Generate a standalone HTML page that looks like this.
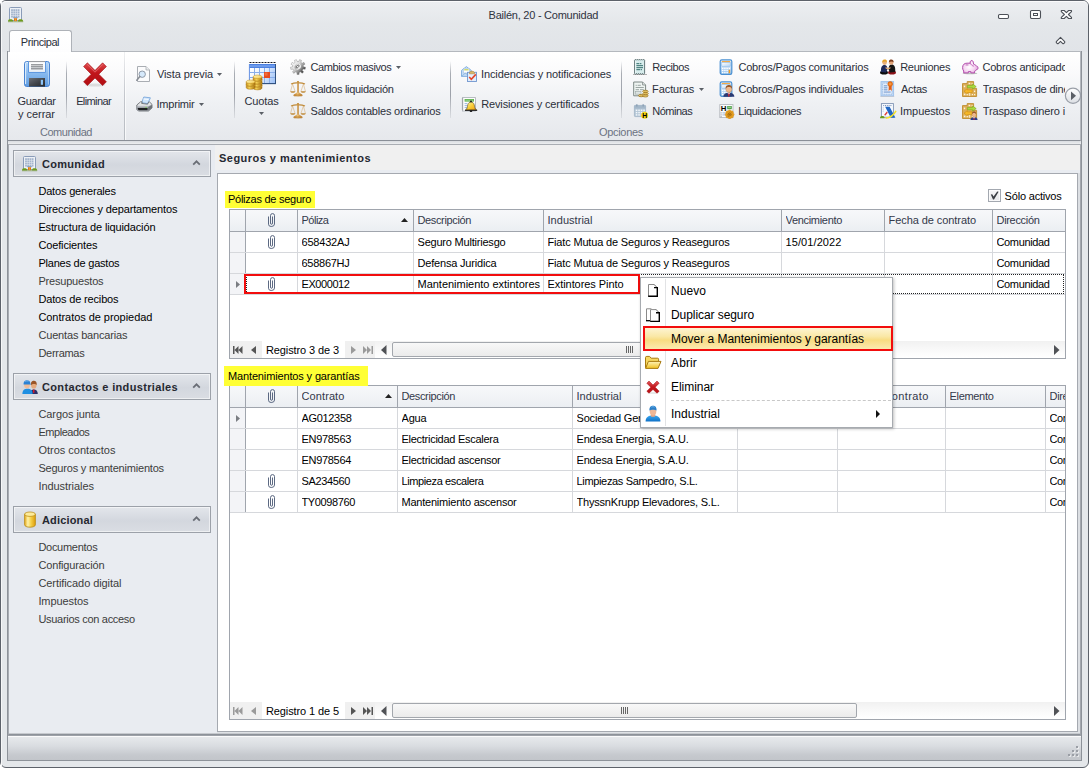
<!DOCTYPE html>
<html lang="es">
<head>
<meta charset="utf-8">
<title>Bailén, 20 - Comunidad</title>
<style>
html,body{margin:0;padding:0;}
body{width:1089px;height:768px;overflow:hidden;background:#fff;font:11px/13px "Liberation Sans", sans-serif;color:#000;}
#win{position:absolute;left:0;top:0;width:1089px;height:768px;overflow:hidden;}
#win div,#win span,#win svg{position:absolute;box-sizing:border-box;}
.t{white-space:nowrap;font:11px/13px "Liberation Sans", sans-serif;}
#win .g{left:0;top:0;width:0;height:0;}

</style>
</head>
<body>
<div id="win">
<div class="g" id="window-frame">
<div style="left:0px;top:0px;width:1089px;height:768px;background:#e4e7ea;border:1px solid #5d626a;border-radius:6px;"></div>
<div style="left:1px;top:1px;width:1087px;height:51px;background:linear-gradient(#eceef1 0,#e4e7ea 45%,#e1e4e8 100%);border-top:1px solid #fbfbfc;border-radius:5px 5px 0 0;"></div>
<div style="left:1px;top:1px;width:1px;height:766px;background:#f6f7f8;"></div>
<div style="left:7px;top:51px;width:1075px;height:710px;border:1px solid #8d9299;border-top:0;background:#e9ecf0;"></div>
</div>
<div class="g" id="titlebar">
<span class="t" style="left:488.6px;top:9px;color:#2f3340;letter-spacing:-0.244px;">Bailén, 20 - Comunidad</span>
<svg style="left:997px;top:13px;" width="13" height="7" viewBox="0 0 13 7"><rect x="1.5" y="1.5" width="10" height="4" rx="1.2" fill="#fff" stroke="#4d5158" stroke-width="1.1"/></svg>
<svg style="left:1029px;top:9px;" width="13" height="11" viewBox="0 0 13 11"><rect x="1.5" y="1.5" width="10" height="8" rx="1.2" fill="#fdfdfd" stroke="#4d5158" stroke-width="1.1"/><rect x="4.5" y="4.5" width="4" height="2" fill="#fff" stroke="#4d5158" stroke-width="1"/></svg>
<svg style="left:1060px;top:9px;" width="13" height="11" viewBox="0 0 13 11"><path d="M1.3 1.5 H4.2 L6.4 3.6 L8.6 1.5 H11.5 V2.6 L8.4 5.5 L11.5 8.4 V9.5 H8.6 L6.4 7.4 L4.2 9.5 H1.3 V8.4 L4.4 5.5 L1.3 2.6 Z" fill="#fff" stroke="#4d5158" stroke-width="1.1" stroke-linejoin="round"/></svg>
<svg style="left:1055px;top:36px;" width="11" height="9" viewBox="0 0 11 9"><path d="M1.3 5.6 L5.5 1.4 L9.7 5.6 V6.6 L8.6 7.6 H7.8 L5.5 5.3 L3.2 7.6 H2.4 L1.3 6.6 Z" fill="#fff" stroke="#4d5158" stroke-width="1.1" stroke-linejoin="round"/></svg>
</div>
<div class="g" id="ribbon">
<div style="left:8px;top:51px;width:1073px;height:90px;background:linear-gradient(#ffffff 0,#fbfbfc 20%,#eef0f3 60%,#e6e8ec 100%);border:1px solid #b4b8be;border-bottom:1px solid #8a8f97;border-left:0;"></div>
<div style="left:9px;top:30px;width:63px;height:22px;background:linear-gradient(#ffffff,#fdfdfe);border:1px solid #aeb2b8;border-bottom:0;border-radius:3px 3px 0 0;"></div>
<span class="t" style="left:20.8px;top:36px;color:#2b2f3a;letter-spacing:-0.432px;">Principal</span>
<div style="left:8px;top:141px;width:1073px;height:3px;background:linear-gradient(#d9dce0,#eceef0);"></div>
<div style="left:124px;top:52px;width:1px;height:88px;background:linear-gradient(rgba(180,184,190,0.2),#c3c6cc 50%,#b8bcc2);"></div>
<div style="left:125px;top:52px;width:1px;height:88px;background:rgba(255,255,255,0.7);"></div>
<div style="left:66px;top:61px;width:1px;height:57px;background:linear-gradient(rgba(160,164,170,0),#a9adb4 22%,#9da1a9 60%,rgba(160,164,170,.2));"></div>
<div style="left:234px;top:61px;width:1px;height:57px;background:linear-gradient(rgba(160,164,170,0),#a9adb4 22%,#9da1a9 60%,rgba(160,164,170,.2));"></div>
<div style="left:450px;top:61px;width:1px;height:57px;background:linear-gradient(rgba(160,164,170,0),#a9adb4 22%,#9da1a9 60%,rgba(160,164,170,.2));"></div>
<div style="left:621px;top:61px;width:1px;height:57px;background:linear-gradient(rgba(160,164,170,0),#a9adb4 22%,#9da1a9 60%,rgba(160,164,170,.2));"></div>
<span class="t" style="left:17.45px;top:95px;color:#2b2f3a;letter-spacing:-0.294px;">Guardar</span>
<span class="t" style="left:18.1px;top:108px;color:#2b2f3a;letter-spacing:-0.060px;">y cerrar</span>
<span class="t" style="left:76.15px;top:95px;color:#2b2f3a;letter-spacing:-0.617px;">Eliminar</span>
<span class="t" style="left:40px;top:126px;color:#6c7382;letter-spacing:-0.474px;">Comunidad</span>
<span class="t" style="left:157px;top:68px;color:#2b2f3a;letter-spacing:-0.107px;">Vista previa</span>
<span class="t" style="left:156.5px;top:98px;color:#2b2f3a;letter-spacing:-0.215px;">Imprimir</span>
<span class="t" style="left:244.45px;top:95px;color:#2b2f3a;letter-spacing:-0.093px;">Cuotas</span>
<span class="t" style="left:310.45px;top:61px;color:#2b2f3a;letter-spacing:-0.388px;">Cambios masivos</span>
<span class="t" style="left:310.5px;top:83px;color:#2b2f3a;letter-spacing:-0.315px;">Saldos liquidación</span>
<span class="t" style="left:310.5px;top:105px;color:#2b2f3a;letter-spacing:-0.190px;">Saldos contables ordinarios</span>
<span class="t" style="left:481.05px;top:68px;color:#2b2f3a;letter-spacing:-0.118px;">Incidencias y notificaciones</span>
<span class="t" style="left:481.15px;top:98px;color:#2b2f3a;letter-spacing:-0.122px;">Revisiones y certificados</span>
<span class="t" style="left:652.15px;top:61px;color:#2b2f3a;letter-spacing:-0.393px;">Recibos</span>
<span class="t" style="left:652.1px;top:83px;color:#2b2f3a;letter-spacing:-0.100px;">Facturas</span>
<span class="t" style="left:652.2px;top:105px;color:#2b2f3a;letter-spacing:-0.487px;">Nóminas</span>
<span class="t" style="left:738.45px;top:61px;color:#2b2f3a;letter-spacing:-0.205px;">Cobros/Pagos comunitarios</span>
<span class="t" style="left:738.45px;top:83px;color:#2b2f3a;letter-spacing:-0.210px;">Cobros/Pagos individuales</span>
<span class="t" style="left:738.15px;top:105px;color:#2b2f3a;letter-spacing:-0.329px;">Liquidaciones</span>
<span class="t" style="left:900.15px;top:61px;color:#2b2f3a;letter-spacing:-0.288px;">Reuniones</span>
<span class="t" style="left:901px;top:83px;color:#2b2f3a;letter-spacing:-0.303px;">Actas</span>
<span class="t" style="left:900.05px;top:105px;color:#2b2f3a;letter-spacing:-0.083px;">Impuestos</span>
<span class="t" style="left:982.45px;top:61px;color:#2b2f3a;letter-spacing:-0.221px;width:82.6px;overflow:hidden;">Cobros anticipados</span>
<span class="t" style="left:982.75px;top:83px;color:#2b2f3a;letter-spacing:-0.204px;width:82.3px;overflow:hidden;">Traspasos de dinero</span>
<span class="t" style="left:982.75px;top:105px;color:#2b2f3a;letter-spacing:-0.138px;width:82.3px;overflow:hidden;">Traspaso dinero individual</span>
<span class="t" style="left:599px;top:126px;color:#6c7382;letter-spacing:-0.311px;">Opciones</span>
<svg style="left:217px;top:73px;" width="5" height="3" viewBox="0 0 5 3"><path d="M0 0 H5 L2.5 3 Z" fill="#5a5f66"/></svg>
<svg style="left:199px;top:103px;" width="5" height="3" viewBox="0 0 5 3"><path d="M0 0 H5 L2.5 3 Z" fill="#5a5f66"/></svg>
<svg style="left:259px;top:112px;" width="5" height="3" viewBox="0 0 5 3"><path d="M0 0 H5 L2.5 3 Z" fill="#5a5f66"/></svg>
<svg style="left:396px;top:66px;" width="5" height="3" viewBox="0 0 5 3"><path d="M0 0 H5 L2.5 3 Z" fill="#5a5f66"/></svg>
<svg style="left:699px;top:88px;" width="5" height="3" viewBox="0 0 5 3"><path d="M0 0 H5 L2.5 3 Z" fill="#5a5f66"/></svg>
<svg style="left:1064px;top:87px;" width="18" height="18" viewBox="0 0 18 18"><defs><linearGradient id="sb" x1="0" y1="0" x2="0" y2="1"><stop offset="0" stop-color="#ffffff"/><stop offset="1" stop-color="#dcdfe4"/></linearGradient></defs><circle cx="9" cy="8.8" r="7.6" fill="url(#sb)" stroke="#9a9fa8" stroke-width="1.2"/><path d="M7 4.4 L12 8.8 L7 13.2 Z" fill="#5b5f66"/></svg>
<svg style="left:8px;top:7px;" width="16" height="16" viewBox="0 0 16 16"><rect x="1.5" y="0.5" width="12" height="13" rx="1" fill="#edf1f6" stroke="#8a9cb8"/><g fill="#a5b5cc"><rect x="3.1" y="2.2" width="1.8" height="1.8"/><rect x="3.1" y="4.4" width="1.8" height="1.8"/><rect x="3.1" y="6.6000000000000005" width="1.8" height="1.8"/><rect x="3.1" y="8.8" width="1.8" height="1.8"/><rect x="5.300000000000001" y="2.2" width="1.8" height="1.8"/><rect x="5.300000000000001" y="4.4" width="1.8" height="1.8"/><rect x="5.300000000000001" y="6.6000000000000005" width="1.8" height="1.8"/><rect x="5.300000000000001" y="8.8" width="1.8" height="1.8"/><rect x="7.5" y="2.2" width="1.8" height="1.8"/><rect x="7.5" y="4.4" width="1.8" height="1.8"/><rect x="7.5" y="6.6000000000000005" width="1.8" height="1.8"/><rect x="7.5" y="8.8" width="1.8" height="1.8"/><rect x="9.700000000000001" y="2.2" width="1.8" height="1.8"/><rect x="9.700000000000001" y="4.4" width="1.8" height="1.8"/><rect x="9.700000000000001" y="6.6000000000000005" width="1.8" height="1.8"/><rect x="9.700000000000001" y="8.8" width="1.8" height="1.8"/></g><rect x="5.2" y="10.3" width="4.6" height="0.9" fill="#6f8fb8"/><rect x="6" y="11.2" width="3" height="3" fill="#e07c12"/><rect x="7.3" y="11.2" width="0.5" height="3" fill="#f7b25a"/><path d="M0 14.6 C0 12.4 1.4 12.2 2.6 12.2 C4 12.2 5.2 12.6 5.2 14.6 Z" fill="#6d9b1d"/><path d="M10 14.6 C10 12.4 11.4 12.2 12.6 12.2 C14 12.2 15.2 12.6 15.2 14.6 Z" fill="#6d9b1d"/><rect x="0" y="14.4" width="15.2" height="0.8" fill="#7a9a4a" opacity=".8"/></svg>
<svg style="left:23px;top:60px;" width="28" height="28" viewBox="0 0 28 28"><defs><linearGradient id="g1" x1="0" y1="0" x2="0" y2="1"><stop offset="0" stop-color="#b4d6f8"/><stop offset=".5" stop-color="#86b8ee"/><stop offset="1" stop-color="#5e9be0"/></linearGradient><linearGradient id="g3" x1="0" y1="0" x2="0" y2="1"><stop offset="0" stop-color="#ffffff"/><stop offset=".7" stop-color="#f4f7fb"/><stop offset="1" stop-color="#dbe5f2"/></linearGradient><linearGradient id="g2" x1="0" y1="0" x2="1" y2="1"><stop offset="0" stop-color="#6a6e76"/><stop offset=".5" stop-color="#43464b"/><stop offset="1" stop-color="#26282b"/></linearGradient></defs><rect x="1.5" y="1.5" width="25" height="25" rx="2.2" fill="url(#g1)" stroke="#4a84d2"/><path d="M2.6 24 V3.4 Q2.6 2.6 3.6 2.6 H5" fill="none" stroke="#e6f2fd" stroke-width="1" opacity=".95"/><path d="M25.5 4 V24.5" fill="none" stroke="#cfe4fa" stroke-width=".8" opacity=".7"/><path d="M5.5 1.5 V12.5 H22.5 V1.5" fill="url(#g3)" stroke="#5f98e0" stroke-width="1"/><path d="M6 1.6 H22" stroke="#9a9a9a" stroke-width="1"/><g fill="#5a5d62"><rect x="8" y="4.4" width="12" height=".9"/><rect x="8" y="6.4" width="12" height=".9"/><rect x="8" y="8.4" width="12" height=".9"/></g><rect x="6" y="18" width="16" height="8.6" fill="url(#g2)"/><rect x="17.8" y="19.8" width="2.2" height="5" fill="#8cc4f8"/></svg>
<svg style="left:82px;top:61px;" width="26" height="26" viewBox="0 0 26 26"><defs><linearGradient id="g4" x1="0" y1="0" x2="0" y2="1"><stop offset="0" stop-color="#e04a4d"/><stop offset=".45" stop-color="#c0151a"/><stop offset="1" stop-color="#b20e13"/></linearGradient></defs><ellipse cx="13" cy="24" rx="10" ry="1.6" fill="#000" opacity=".10"/><path d="M5.4 1.8 L13 9.4 L20.6 1.8 L24.4 5.6 L16.8 13.2 L24.4 20.8 L20.6 24.6 L13 17 L5.4 24.6 L1.6 20.8 L9.2 13.2 L1.6 5.6 Z" fill="url(#g4)" stroke="#a00c11" stroke-width=".6" stroke-linejoin="round"/><path d="M5 3.2 L13 11.2 L21 3.2" fill="none" stroke="#f08a8c" stroke-width="1" opacity=".6"/></svg>
<svg style="left:136px;top:66px;" width="16" height="16" viewBox="0 0 16 16"><path d="M1.5 0.5 H10 L13.5 4 V15.5 H1.5 Z" fill="#fbfbfc" stroke="#a9adb3"/><path d="M10 0.5 V4 H13.5" fill="#eceef0" stroke="#a9adb3" stroke-width=".8"/><circle cx="6.2" cy="8.2" r="3.2" fill="#d6e9fb" stroke="#8f9aa8" stroke-width="1"/><path d="M3.8 10.6 L0.8 14.2" stroke="#8a8f97" stroke-width="1.6" stroke-linecap="round"/></svg>
<svg style="left:136px;top:96px;" width="17" height="16" viewBox="0 0 17 16"><defs><linearGradient id="g5" x1="0" y1="0" x2="0" y2="1"><stop offset="0" stop-color="#f4f5f6"/><stop offset="1" stop-color="#b4b8be"/></linearGradient></defs><path d="M5.6 6.6 L7.8 1 L14.4 1.8 L11.8 7.6 Z" fill="#cfe4fb" stroke="#6f9fd8" stroke-width=".8"/><path d="M7.4 3 L12.6 3.6" stroke="#ffffff" stroke-width=".8"/><path d="M0.8 9 L4.6 5.8 H6.2 L5.6 7.4 L11.6 8.2 L12.6 6 H13.6 L16 8.4 V12 L12.4 15 H2.4 L0.8 13.4 Z" fill="url(#g5)" stroke="#5c6066" stroke-width=".8" stroke-linejoin="round"/><path d="M0.8 10.6 H12 L16 8.4 V12 L12.4 15 H2.4 L0.8 13.4 Z" fill="#9ea2a9"/><path d="M1.8 12 H11.6 V14.2 H2.8 L1.8 13.2 Z" fill="#1e2023"/><path d="M12.2 14.8 L16 11.8 V9 L12.2 11 Z" fill="#6e7278"/><rect x="9.4" y="10.9" width="1.3" height=".9" fill="#78d840"/></svg>
<svg style="left:245px;top:60px;" width="34" height="32" viewBox="0 0 34 32"><defs><linearGradient id="g6" gradientUnits="userSpaceOnUse" x1="5" y1="8" x2="30" y2="23"><stop offset="0" stop-color="#ffffff"/><stop offset=".45" stop-color="#eaf2fe"/><stop offset="1" stop-color="#9cc0f6"/></linearGradient><linearGradient id="g7" x1="0" y1="0" x2="0" y2="1"><stop offset="0" stop-color="#3a72dc"/><stop offset=".5" stop-color="#7ea8f0"/><stop offset="1" stop-color="#3a72dc"/></linearGradient><linearGradient id="g8" x1="0" y1="0" x2="1" y2="0"><stop offset="0" stop-color="#c48c18"/><stop offset=".35" stop-color="#f6d458"/><stop offset="1" stop-color="#a8720e"/></linearGradient><linearGradient id="g9" x1="0" y1="0" x2="1" y2="1"><stop offset="0" stop-color="#fff6bc"/><stop offset="1" stop-color="#f2c84a"/></linearGradient></defs><rect x="4" y="3" width="27" height="21" fill="#8aaeea"/><rect x="4" y="3" width="27" height="1.2" fill="#ffffff"/><path d="M4.5 2.5 H31" stroke="#16161e" stroke-width="1" stroke-dasharray="2 1"/><rect x="4" y="4" width="27" height="4" fill="url(#g7)"/><g fill="url(#g6)"><rect x="5" y="8" width="4" height="4"/><rect x="10" y="8" width="4" height="4"/><rect x="15" y="8" width="4" height="4"/><rect x="20" y="8" width="4" height="4"/><rect x="25" y="8" width="5" height="4"/><rect x="5" y="13" width="4" height="4"/><rect x="10" y="13" width="4" height="4"/><rect x="15" y="13" width="4" height="4"/><rect x="20" y="13" width="4" height="4"/><rect x="25" y="13" width="5" height="4"/><rect x="5" y="18" width="4" height="5"/><rect x="10" y="18" width="4" height="5"/><rect x="15" y="18" width="4" height="5"/><rect x="20" y="18" width="4" height="5"/><rect x="25" y="18" width="5" height="5"/></g><rect x="19" y="12" width="6" height="6" fill="#e84a1e"/><rect x="19.6" y="12.6" width="3" height="3" fill="#f47a48" opacity=".7"/><path d="M30.5 4 V24" stroke="#2f507e" stroke-width="1"/><path d="M4 23.6 H31" stroke="#2f507e" stroke-width="1.1"/><path d="M4.4 4 V23" stroke="#6a94e2" stroke-width=".8"/><path d="M8.2 25.5 V28.099999999999998 A4.4 1.8 0 0 0 17.0 28.099999999999998 V25.5 Z" fill="url(#g8)" stroke="#a87412" stroke-width=".5"/><ellipse cx="12.6" cy="25.5" rx="4.4" ry="1.8" fill="url(#g9)" stroke="#c08c1c" stroke-width=".5"/><path d="M8.2 22.6 V25.2 A4.4 1.8 0 0 0 17.0 25.2 V22.6 Z" fill="url(#g8)" stroke="#a87412" stroke-width=".5"/><ellipse cx="12.6" cy="22.6" rx="4.4" ry="1.8" fill="url(#g9)" stroke="#c08c1c" stroke-width=".5"/><path d="M8.2 19.7 V22.299999999999997 A4.4 1.8 0 0 0 17.0 22.299999999999997 V19.7 Z" fill="url(#g8)" stroke="#a87412" stroke-width=".5"/><ellipse cx="12.6" cy="19.7" rx="4.4" ry="1.8" fill="url(#g9)" stroke="#c08c1c" stroke-width=".5"/><path d="M8.2 16.8 V19.4 A4.4 1.8 0 0 0 17.0 19.4 V16.8 Z" fill="url(#g8)" stroke="#a87412" stroke-width=".5"/><ellipse cx="12.6" cy="16.8" rx="4.4" ry="1.8" fill="url(#g9)" stroke="#c08c1c" stroke-width=".5"/><path d="M1.1999999999999993 24.8 V27.5 A4.4 1.8 0 0 0 10.0 27.5 V24.8 Z" fill="url(#g8)" stroke="#a87412" stroke-width=".5"/><ellipse cx="5.6" cy="24.8" rx="4.4" ry="1.8" fill="url(#g9)" stroke="#c08c1c" stroke-width=".5"/><path d="M1.1999999999999993 21.8 V24.5 A4.4 1.8 0 0 0 10.0 24.5 V21.8 Z" fill="url(#g8)" stroke="#a87412" stroke-width=".5"/><ellipse cx="5.6" cy="21.8" rx="4.4" ry="1.8" fill="url(#g9)" stroke="#c08c1c" stroke-width=".5"/></svg>
<svg style="left:290px;top:59px;" width="16" height="16" viewBox="0 0 16 16"><defs><linearGradient id="g10" gradientUnits="userSpaceOnUse" x1="2" y1="3" x2="14" y2="13"><stop offset="0" stop-color="#ffffff"/><stop offset=".4" stop-color="#dcdcdc"/><stop offset=".72" stop-color="#8a8a8a"/><stop offset="1" stop-color="#262626"/></linearGradient><linearGradient id="g11" gradientUnits="userSpaceOnUse" x1="4" y1="4" x2="12" y2="12"><stop offset="0" stop-color="#6e6e6e"/><stop offset=".5" stop-color="#e8e8e8"/><stop offset="1" stop-color="#ffffff"/></linearGradient></defs><path d="M13.50 7.84 L15.50 8.22 L15.14 10.29 L13.13 9.99 L12.32 11.41 L13.60 12.99 L12.00 14.34 L10.65 12.82 L9.12 13.39 L9.08 15.42 L6.99 15.43 L6.93 13.40 L5.39 12.84 L4.06 14.38 L2.45 13.04 L3.71 11.45 L2.89 10.04 L0.88 10.35 L0.51 8.29 L2.50 7.88 L2.78 6.27 L1.03 5.22 L2.07 3.41 L3.86 4.38 L5.11 3.32 L4.45 1.40 L6.41 0.67 L7.16 2.56 L8.79 2.56 L9.52 0.66 L11.49 1.36 L10.85 3.30 L12.11 4.34 L13.89 3.35 L14.94 5.16 L13.21 6.23 Z" fill="url(#g10)" stroke="#7a7a7a" stroke-width=".4" stroke-linejoin="round"/><ellipse cx="7.8" cy="7.8" rx="3.3" ry="2.7" fill="url(#g11)" transform="rotate(-40 7.8 7.8)"/><ellipse cx="7.7" cy="7.5" rx="1.8" ry=".9" fill="#ffffff" stroke="#4a4a4a" stroke-width=".7" transform="rotate(-42 7.7 7.5)"/></svg>
<svg style="left:290px;top:81px;" width="16" height="16" viewBox="0 0 16 16"><defs><linearGradient id="g12" x1="0" y1="0" x2="1" y2="0"><stop offset="0" stop-color="#b87a28"/><stop offset=".45" stop-color="#ecc27a"/><stop offset="1" stop-color="#b47424"/></linearGradient></defs><g fill="none" stroke="#d9b078" stroke-width=".6"><path d="M2.6 3 L0.6 10.2 M2.6 3 L5 10.2"/><path d="M13.4 3 L11 10.2 M13.4 3 L15.4 10.2"/></g><path d="M1 3.1 Q4.5 1.6 8 2 Q11.5 1.6 15 3.1" fill="none" stroke="#c08a38" stroke-width="1.1"/><rect x="7.2" y="0.8" width="1.6" height="12.6" fill="url(#g12)"/><circle cx="8" cy="1" r="1.1" fill="#c89444"/><path d="M0.2 10.2 H5.4 C5.2 11.5 4 11.8 2.8 11.8 C1.6 11.8 0.4 11.5 0.2 10.2 Z" fill="#c08a38"/><path d="M10.6 10.2 H15.8 C15.6 11.5 14.4 11.8 13.2 11.8 C12 11.8 10.8 11.5 10.6 10.2 Z" fill="#c08a38"/><path d="M6.8 11.4 L3.4 14 C3.4 15.6 12.6 15.6 12.6 14 L9.2 11.4 Z" fill="url(#g12)"/><ellipse cx="8" cy="14.4" rx="4.7" ry="1.2" fill="#b87a28" opacity=".55"/></svg>
<svg style="left:290px;top:103px;" width="16" height="16" viewBox="0 0 16 16"><defs><linearGradient id="g13" x1="0" y1="0" x2="1" y2="0"><stop offset="0" stop-color="#b87a28"/><stop offset=".45" stop-color="#ecc27a"/><stop offset="1" stop-color="#b47424"/></linearGradient></defs><g fill="none" stroke="#d9b078" stroke-width=".6"><path d="M2.6 3 L0.6 10.2 M2.6 3 L5 10.2"/><path d="M13.4 3 L11 10.2 M13.4 3 L15.4 10.2"/></g><path d="M1 3.1 Q4.5 1.6 8 2 Q11.5 1.6 15 3.1" fill="none" stroke="#c08a38" stroke-width="1.1"/><rect x="7.2" y="0.8" width="1.6" height="12.6" fill="url(#g13)"/><circle cx="8" cy="1" r="1.1" fill="#c89444"/><path d="M0.2 10.2 H5.4 C5.2 11.5 4 11.8 2.8 11.8 C1.6 11.8 0.4 11.5 0.2 10.2 Z" fill="#c08a38"/><path d="M10.6 10.2 H15.8 C15.6 11.5 14.4 11.8 13.2 11.8 C12 11.8 10.8 11.5 10.6 10.2 Z" fill="#c08a38"/><path d="M6.8 11.4 L3.4 14 C3.4 15.6 12.6 15.6 12.6 14 L9.2 11.4 Z" fill="url(#g13)"/><ellipse cx="8" cy="14.4" rx="4.7" ry="1.2" fill="#b87a28" opacity=".55"/></svg>
<svg style="left:461px;top:66px;" width="16" height="16" viewBox="0 0 16 16"><path d="M0.5 4.4 L5.4 0.6 L10.3 4.4 V10.4 H0.5 Z" fill="#c3dcf5" stroke="#6fa3dc" stroke-width=".8"/><rect x="2.4" y="2.4" width="6" height="4.6" fill="#fdfefe" stroke="#9ab9dd" stroke-width=".5"/><rect x="3.2" y="3.2" width="4.4" height="1.2" fill="#c3d24e"/><path d="M0.6 10.3 L4.2 7.2 L6.4 8.6" fill="none" stroke="#7eaedf" stroke-width=".7"/><rect x="6.5" y="6.3" width="9" height="9.2" fill="#e3eefb" stroke="#6f96cf" stroke-width=".9"/><path d="M8.4 7.2 C8.4 4.6 13.6 4.6 13.6 7.2 V7.8 H8.4 Z" fill="#dbb868" stroke="#a07c34" stroke-width=".5"/><path d="M8.2 11 L10.3 13.3 L14.8 8.4" fill="none" stroke="#e4472a" stroke-width="1.6"/></svg>
<svg style="left:461px;top:96px;" width="17" height="17" viewBox="0 0 17 17"><defs><linearGradient id="g14" x1="0" y1="0" x2="1" y2="1"><stop offset="0" stop-color="#fff3b0"/><stop offset=".5" stop-color="#f9cf3a"/><stop offset="1" stop-color="#ee9a14"/></linearGradient></defs><rect x="1.5" y="1.6" width="13" height="13.4" fill="#fdfdfd" stroke="#a9adb3" stroke-width=".8"/><g fill="#7d828a"><rect x="0.8" y="2.6" width="1.5" height=".8"/><rect x="0.8" y="4.6" width="1.5" height=".8"/><rect x="0.8" y="6.6" width="1.5" height=".8"/><rect x="0.8" y="8.6" width="1.5" height=".8"/><rect x="0.8" y="10.6" width="1.5" height=".8"/><rect x="0.8" y="12.6" width="1.5" height=".8"/></g><rect x="3.6" y="3" width="9.4" height="2.6" fill="#5db24e"/><rect x="4.4" y="3.8" width="7.8" height=".8" fill="#a6d99c"/><g fill="#8fb0dc"><rect x="3.6" y="7.2" width="2.6" height=".9"/><rect x="3.6" y="9.2" width="2.6" height=".9"/><rect x="3.6" y="11.2" width="2.6" height=".9"/></g><path d="M4.4 14 C6.6 13 6.2 10.6 6.8 8.6 C7.3 6.8 8.6 6 10 6 C11.4 6 12.7 6.8 13.2 8.6 C13.8 10.6 13.4 13 15.8 14 Z" fill="url(#g14)" stroke="#3a2a08" stroke-width=".5"/><path d="M4 14.3 H16.2" stroke="#111" stroke-width="1"/><circle cx="10" cy="5.4" r=".9" fill="#111"/><ellipse cx="10" cy="15.2" rx="1.3" ry=".8" fill="#111"/></svg>
<svg style="left:633px;top:59px;" width="14" height="16" viewBox="0 0 14 16"><path d="M1.6 1.2 L2.6 0.2 L3.6 1.2 L4.6 0.2 L5.6 1.2 L6.6 0.2 L7.6 1.2 L8.6 0.2 L9.6 1.2 L10.6 0.2 L11.6 1.2 V14.4 L10.6 15.4 L9.6 14.4 L8.6 15.4 L7.6 14.4 L6.6 15.4 L5.6 14.4 L4.6 15.4 L3.6 14.4 L2.6 15.4 L1.6 14.4 Z" fill="#d7ecec" stroke="#52686a" stroke-width=".9"/><path d="M2.6 2 V14" stroke="#f4fbfb" stroke-width=".8"/><g fill="#4f8482"><rect x="3.4" y="4" width="3" height="1.2"/><rect x="7" y="4" width="1.4" height="1.2"/><rect x="3.4" y="6" width="6.6" height="1.2"/><rect x="3.4" y="8" width="6.6" height="1.2"/><rect x="3.4" y="10" width="3.6" height="1.2"/><rect x="7.6" y="10" width="1.4" height="1.2"/></g><rect x="0" y="15.1" width="14" height=".8" fill="#555" opacity=".55"/></svg>
<svg style="left:633px;top:81px;" width="16" height="17" viewBox="0 0 16 17"><path d="M0.7 1 H9.6 L12.6 4 V14.8 H0.7 Z" fill="#eef3f1" stroke="#7d8886" stroke-width="1"/><path d="M9.6 1 V4 H12.6" fill="#dfe5e3" stroke="#7d8886" stroke-width=".8"/><g fill="#9ba6a4"><rect x="2.6" y="3.8" width="1.2" height="1"/><rect x="4.6" y="3.8" width="3.2" height="1"/><rect x="2.6" y="6" width="8.2" height="1"/><rect x="2.6" y="8.2" width="3.4" height="1"/><rect x="7" y="8.2" width="3.8" height="1"/></g><rect x="2.6" y="10.6" width="5.4" height="2.6" fill="#dde4e2" stroke="#9ba6a4" stroke-width=".6"/><ellipse cx="8.2" cy="14.6" rx="2.7" ry="1.15" fill="#f3d684" stroke="#9c7416" stroke-width=".8"/><path d="M6.8999999999999995 14.6 H9.5" stroke="#c49a30" stroke-width=".5"/><ellipse cx="12.4" cy="14.8" rx="2.7" ry="1.15" fill="#f3d684" stroke="#9c7416" stroke-width=".8"/><path d="M11.1 14.8 H13.700000000000001" stroke="#c49a30" stroke-width=".5"/><ellipse cx="12.6" cy="12.6" rx="2.7" ry="1.15" fill="#f3d684" stroke="#9c7416" stroke-width=".8"/><path d="M11.299999999999999 12.6 H13.9" stroke="#c49a30" stroke-width=".5"/><ellipse cx="12.4" cy="10.4" rx="2.7" ry="1.15" fill="#f3d684" stroke="#9c7416" stroke-width=".8"/><path d="M11.1 10.4 H13.700000000000001" stroke="#c49a30" stroke-width=".5"/></svg>
<svg style="left:633px;top:103px;" width="16" height="16" viewBox="0 0 16 16"><rect x="1.4" y="2.4" width="11.2" height="11.2" rx=".8" fill="#b5c7d7" stroke="#9fb3c4" stroke-width=".8"/><rect x="1.4" y="2.4" width="11.2" height="3.2" fill="#a3b7c9"/><rect x="3" y="1.2" width="1.6" height="2.4" rx=".5" fill="#8da2b6"/><rect x="9.4" y="1.2" width="1.6" height="2.4" rx=".5" fill="#8da2b6"/><g fill="#f4f8fb"><rect x="2.8" y="6.6" width="1.5" height="1.4"/><rect x="2.8" y="8.899999999999999" width="1.5" height="1.4"/><rect x="2.8" y="11.2" width="1.5" height="1.4"/><rect x="5.3" y="6.6" width="1.5" height="1.4"/><rect x="5.3" y="8.899999999999999" width="1.5" height="1.4"/><rect x="5.3" y="11.2" width="1.5" height="1.4"/><rect x="7.8" y="6.6" width="1.5" height="1.4"/><rect x="7.8" y="8.899999999999999" width="1.5" height="1.4"/><rect x="7.8" y="11.2" width="1.5" height="1.4"/><rect x="10.3" y="6.6" width="1.5" height="1.4"/><rect x="10.3" y="8.899999999999999" width="1.5" height="1.4"/><rect x="10.3" y="11.2" width="1.5" height="1.4"/></g><circle cx="11.6" cy="12.2" r="3.5" fill="#fadb14"/><text x="11.6" y="14.5" text-anchor="middle" font-family="Liberation Sans, sans-serif" font-weight="bold" font-size="6.8" fill="#000" opacity=".99">H</text></svg>
<svg style="left:719px;top:59px;" width="16" height="16" viewBox="0 0 16 16"><defs><linearGradient id="g15" x1="0" y1="0" x2="0" y2="1"><stop offset="0" stop-color="#f2f8fe"/><stop offset=".45" stop-color="#cfe3f7"/><stop offset="1" stop-color="#8fc0ec"/></linearGradient><linearGradient id="g16" x1="0" y1="0" x2="1" y2="1"><stop offset="0" stop-color="#ffffff"/><stop offset="1" stop-color="#b7d6f4"/></linearGradient></defs><rect x="1.2" y="0.8" width="11.6" height="14.6" rx="1.6" fill="url(#g15)" stroke="#4a90d2" stroke-width="1.2"/><rect x="2.8" y="2.2" width="8.4" height="1" fill="#f59a1c"/><rect x="2.8" y="3.6" width="8.4" height="3.6" fill="url(#g16)" stroke="#7fb2e4" stroke-width=".5"/><g fill="#ffffff"><rect x="3.0" y="8.8" width="1.4" height="1.3"/><rect x="3.0" y="10.9" width="1.4" height="1.3"/><rect x="3.0" y="13.0" width="1.4" height="1.3"/><rect x="5.2" y="8.8" width="1.4" height="1.3"/><rect x="5.2" y="10.9" width="1.4" height="1.3"/><rect x="5.2" y="13.0" width="1.4" height="1.3"/><rect x="7.4" y="8.8" width="1.4" height="1.3"/><rect x="7.4" y="10.9" width="1.4" height="1.3"/><rect x="7.4" y="13.0" width="1.4" height="1.3"/></g><rect x="9.7" y="10.8" width="1.4" height="3.4" fill="#f59a1c"/><rect x="9.7" y="8.8" width="1.4" height="1.3" fill="#fff"/></svg>
<svg style="left:719px;top:81px;" width="16" height="16" viewBox="0 0 16 16"><defs><linearGradient id="g17" x1="0" y1="0" x2="0" y2="1"><stop offset="0" stop-color="#f2f8fe"/><stop offset=".45" stop-color="#cfe3f7"/><stop offset="1" stop-color="#8fc0ec"/></linearGradient><linearGradient id="g18" x1="0" y1="0" x2="1" y2="1"><stop offset="0" stop-color="#ffffff"/><stop offset="1" stop-color="#b7d6f4"/></linearGradient></defs><rect x="1.2" y="0.8" width="11.6" height="14.6" rx="1.6" fill="url(#g17)" stroke="#4a90d2" stroke-width="1.2"/><rect x="2.8" y="2.2" width="8.4" height="1" fill="#f59a1c"/><rect x="2.8" y="3.6" width="8.4" height="3.6" fill="url(#g18)" stroke="#7fb2e4" stroke-width=".5"/><g fill="#ffffff"><rect x="3.0" y="8.8" width="1.4" height="1.3"/><rect x="3.0" y="10.9" width="1.4" height="1.3"/><rect x="3.0" y="13.0" width="1.4" height="1.3"/><rect x="5.2" y="8.8" width="1.4" height="1.3"/><rect x="5.2" y="10.9" width="1.4" height="1.3"/><rect x="5.2" y="13.0" width="1.4" height="1.3"/><rect x="7.4" y="8.8" width="1.4" height="1.3"/><rect x="7.4" y="10.9" width="1.4" height="1.3"/><rect x="7.4" y="13.0" width="1.4" height="1.3"/></g><rect x="9.7" y="10.8" width="1.4" height="3.4" fill="#f59a1c"/><rect x="9.7" y="8.8" width="1.4" height="1.3" fill="#fff"/><g transform="translate(4.4 3.6) scale(0.78 0.7)"><path d="M0 17.5 C0 13 3 11.5 7 11.5 C11 11.5 14 13 14 17.5 Z" fill="#2a3a72"/><path d="M5 11.6 L7 14.4 L9 11.6 Z" fill="#fff"/><path d="M6.4 12.4 H7.6 L8 16.5 L7 17.5 L6 16.5 Z" fill="#d02030"/><ellipse cx="7" cy="6.6" rx="3.8" ry="4.4" fill="#eeb98e" stroke="#b88456" stroke-width=".5"/><path d="M2.9 6 C2.6 1.6 5 0.6 7 0.6 C9.4 0.6 11.4 1.6 11.1 6 C10.2 3.8 8.8 3.4 7 3.4 C5.2 3.4 3.8 3.8 2.9 6 Z" fill="#9a5a2a"/></g></svg>
<svg style="left:719px;top:103px;" width="16" height="16" viewBox="0 0 16 16"><rect x="0.8" y="1.6" width="13.2" height="13" fill="#fbfbfb" stroke="#b0b4b9" stroke-width=".8"/><rect x="8.2" y="3" width="4.6" height="3.2" fill="#4fa24a"/><rect x="9" y="3.8" width="3" height=".8" fill="#bfe3b7"/><text x="4.6" y="8.2" text-anchor="middle" font-family="Liberation Sans, sans-serif" font-weight="bold" font-size="7.8" fill="#000" opacity=".99">H</text><g fill="#8a8f97"><rect x="1.6" y="9.4" width="1" height="1"/><rect x="1.6" y="11.4" width="1" height="1"/><rect x="1.6" y="13.2" width="1" height="1"/></g><g fill="#9fb6d6"><rect x="3.4" y="9.4" width="3" height="1"/><rect x="3.4" y="11.4" width="3" height="1"/></g><g fill="#eaa224" stroke="#c47e12" stroke-width=".3"><circle cx="13.70" cy="11.40" r="1.5"/><circle cx="12.79" cy="13.59" r="1.5"/><circle cx="10.60" cy="14.50" r="1.5"/><circle cx="8.41" cy="13.59" r="1.5"/><circle cx="7.50" cy="11.40" r="1.5"/><circle cx="8.40" cy="9.21" r="1.5"/><circle cx="10.59" cy="8.30" r="1.5"/><circle cx="12.79" cy="9.20" r="1.5"/></g><circle cx="10.6" cy="11.4" r="3.3" fill="#e09a1c"/><path d="M8.6 12.8 L12.4 9.8 M9 10.6 L12.2 12.2 M9.2 13.6 L12.8 11.4 M8.4 11.6 L11.2 9.4" stroke="#8e5c0e" stroke-width=".7" opacity=".85"/></svg>
<svg style="left:880px;top:59px;" width="16" height="16" viewBox="0 0 16 16"><ellipse cx="4" cy="13.4" rx="4" ry="2" fill="#0c0c0c"/><ellipse cx="12" cy="13.6" rx="4" ry="2" fill="#8c1218"/><path d="M1 13 C0.6 8.5 2 6 4.4 6 C6.6 6 7.6 8 7.4 10.5 L6 13.5 Z" fill="#1e2a5a"/><path d="M15.2 13 C15.6 8 14.2 5.6 11.8 5.6 C9.6 5.6 8.4 7.6 8.6 10.5 L10 13.6 Z" fill="#151515"/><circle cx="4.6" cy="3.6" r="2.3" fill="#e8b07a"/><path d="M2.2 3.4 C2.2 1 3.6 0.6 4.8 0.6 C6 0.6 7 1.2 7 3 C6 2.2 3.6 2.2 2.2 3.4 Z" fill="#e6a32a"/><circle cx="11.2" cy="3.4" r="2.3" fill="#e3a67a"/><path d="M8.9 3.2 C8.8 0.8 10.2 0.4 11.4 0.4 C12.8 0.4 13.7 1.2 13.6 3.2 C12.6 2.2 10.2 2.2 8.9 3.2 Z" fill="#7a3a1c"/><path d="M5.6 8 L8 9.2 L10.4 8 L10.4 9.6 L8 10.6 L5.6 9.6 Z" fill="#e8b07a"/></svg>
<svg style="left:880px;top:81px;" width="16" height="16" viewBox="0 0 16 16"><rect x="1" y="0.6" width="12.6" height="14.2" fill="#c4dbf6" stroke="#9dc0ec" stroke-width=".9"/><rect x="2.6" y="2.2" width="9.4" height="11" fill="#e4effd" stroke="#6f97cf" stroke-width=".5" stroke-dasharray="1 .7"/><g fill="#5f88c4"><rect x="3.8" y="4.4" width="3.6" height=".9"/><rect x="3.8" y="6.4" width="3.6" height=".9"/><rect x="3.8" y="8.4" width="3.6" height=".9"/><rect x="3.8" y="10.6" width="6.8" height=".9"/></g><path d="M8.8 4.4 L8.6 10 L10.2 8.6 L11.8 10 L11.6 4.4 Z" fill="#e25c16"/><circle cx="10.2" cy="3" r="2.4" fill="#f07c1e" stroke="#cf5a0e" stroke-width=".6"/><circle cx="10.2" cy="3" r="1.1" fill="#f6a052" opacity=".8"/><rect x="0.4" y="15.1" width="13.8" height=".8" fill="#8a93a0" opacity=".45"/></svg>
<svg style="left:880px;top:103px;" width="17" height="16" viewBox="0 0 17 16"><rect x="1.4" y="0.6" width="12" height="13.6" fill="#f8fbff" stroke="#7f93b3" stroke-width=".9"/><path d="M3.2 2.6 H11.6" stroke="#6f88b0" stroke-width="1" stroke-dasharray="1 .8"/><path d="M3.2 4.4 V9" stroke="#9fb3d0" stroke-width=".8" stroke-dasharray="1 1"/><path d="M5.2 3.8 H9.6 L15.4 14.8 H10.8 Z" fill="#1f66c4"/><path d="M6.8 8.6 L4.2 11.8 L5.2 12.8 L7.8 9.8 Z" fill="#e2423a"/><path d="M5.6 15.2 C9.4 14.8 13.8 12 16 7.8" fill="none" stroke="#f4e22a" stroke-width="1.5"/><path d="M0 15.2 C0 13.4 1 13 2.2 13 C3.6 13 4.6 13.6 4.6 15.2 Z" fill="#6d9b1d"/></svg>
<svg style="left:961px;top:59px;" width="18" height="16" viewBox="0 0 18 16"><defs><radialGradient id="g19" cx=".42" cy=".55" r=".6"><stop offset="0" stop-color="#ffffff"/><stop offset=".55" stop-color="#f6d8f2"/><stop offset="1" stop-color="#e3a0dc"/></radialGradient></defs><ellipse cx="9" cy="14.4" rx="7.4" ry=".8" fill="#5a6a5a" opacity=".4"/><path d="M1.6 8.6 C1.6 5.6 3.4 4.2 6 4.2 H9 L9.4 2.4 C9.8 1.2 11.6 1.2 12 2.4 L12.7 5.2 C14.2 5.6 14.8 6.4 15.3 7 C16.5 7 17 8 17 9 C17 10 16.4 10.7 15.3 10.7 C14.9 11.6 14.3 12.1 13.5 12.4 V13.9 H9.9 V12.6 H7.3 V13.9 H2.7 V12 C1.9 11 1.6 10 1.6 8.6 Z" fill="url(#g19)" stroke="#b24eac" stroke-width="1" stroke-linejoin="round"/><path d="M10.2 3 C10.5 2.4 11.1 2.4 11.3 3 L11.8 5.2 L10.5 4.8 Z" fill="#ffffff"/><path d="M9.4 4.2 C10 5.8 11.2 6.8 12.8 7.2" fill="none" stroke="#b24eac" stroke-width=".8"/><rect x="4.6" y="5.5" width="2.8" height=".9" fill="#b85ab2"/></svg>
<svg style="left:961px;top:81px;" width="17" height="17" viewBox="0 0 17 17"><path d="M1.5 15.5 V2.6 H6.2 V0.6 H12.6 V7.4 H15.6 V15.5 Z" fill="#dcae58" stroke="#c08c2e" stroke-width=".9"/><g fill="#fbf3dc"><rect x="2.8" y="4.6" width="1.4" height="1.6"/><rect x="2.8" y="12.6" width="1.6" height="1.6"/><rect x="5.6" y="12.6" width="1.6" height="1.6"/><rect x="8.2" y="12" width="1" height="2.8"/><rect x="10.8" y="13" width="1.2" height="1.2"/><rect x="13" y="13" width="1.2" height="1.2"/><rect x="13" y="9.6" width="1.2" height="1.4"/><rect x="7.6" y="1.8" width="1.6" height="1.4"/><rect x="10.6" y="2" width="1" height="1.2"/></g><path d="M6.4 4.4 H11.6 V3 L15.2 5.6 L11.6 8.2 V6.8 H6.4 Z" fill="#a8da3c" stroke="#78a81e" stroke-width=".6"/><path d="M11.2 8.8 H6.4 V7.6 L3 10.2 L6.4 12.8 V11.6 H11.2 Z" fill="#f6b828" stroke="#cf8e10" stroke-width=".6"/></svg>
<svg style="left:961px;top:103px;" width="17" height="17" viewBox="0 0 17 17"><path d="M1.5 15.5 V2.6 H6.2 V0.6 H12.6 V7.4 H15.6 V15.5 Z" fill="#dcae58" stroke="#c08c2e" stroke-width=".9"/><g fill="#fbf3dc"><rect x="2.8" y="4.6" width="1.4" height="1.6"/><rect x="2.8" y="12.6" width="1.6" height="1.6"/><rect x="5.6" y="12.6" width="1.6" height="1.6"/><rect x="8.2" y="12" width="1" height="2.8"/><rect x="10.8" y="13" width="1.2" height="1.2"/><rect x="13" y="13" width="1.2" height="1.2"/><rect x="13" y="9.6" width="1.2" height="1.4"/><rect x="7.6" y="1.8" width="1.6" height="1.4"/><rect x="10.6" y="2" width="1" height="1.2"/></g><path d="M6.4 4.4 H11.6 V3 L15.2 5.6 L11.6 8.2 V6.8 H6.4 Z" fill="#a8da3c" stroke="#78a81e" stroke-width=".6"/><path d="M11.2 8.8 H6.4 V7.6 L3 10.2 L6.4 12.8 V11.6 H11.2 Z" fill="#f6b828" stroke="#cf8e10" stroke-width=".6"/><g transform="translate(9.4 8.2) scale(0.52 0.52)"><path d="M0 17.5 C0 13 3 11.5 7 11.5 C11 11.5 14 13 14 17.5 Z" fill="#2a3f8a"/><path d="M5 11.6 L7 14.4 L9 11.6 Z" fill="#fff"/><path d="M6.4 12.4 H7.6 L8 16.5 L7 17.5 L6 16.5 Z" fill="#d02030"/><ellipse cx="7" cy="6.6" rx="3.8" ry="4.4" fill="#eeb98e" stroke="#b88456" stroke-width=".5"/><path d="M2.9 6 C2.6 1.6 5 0.6 7 0.6 C9.4 0.6 11.4 1.6 11.1 6 C10.2 3.8 8.8 3.4 7 3.4 C5.2 3.4 3.8 3.8 2.9 6 Z" fill="#9a5a2a"/></g></svg>
</div>
<div class="g" id="content">
<div style="left:8px;top:144px;width:1073px;height:591px;border:1px solid #a9adb3;border-bottom:1px solid #8d9299;background:#e9ecf1;"></div>
<div style="left:215px;top:145px;width:865px;height:25px;background:#f0f0f0;"></div>
</div>
<div class="g" id="navpanel">
<div style="left:13px;top:150px;width:198px;height:27px;border:1px solid #9ca1a9;background:linear-gradient(#e3e6eb 0,#d3d7de 55%,#dadde3 100%);box-shadow:inset 0 0 0 1px rgba(255,255,255,.55);"></div>
<span class="t" style="left:42px;top:158px;font-weight:bold;color:#262830;letter-spacing:0.278px;">Comunidad</span>
<svg style="left:192px;top:159px;" width="9" height="7" viewBox="0 0 9 7"><path d="M1.2 5.6 L4.5 2.3 L7.8 5.6" fill="none" stroke="#6a6e76" stroke-width="1.8"/></svg>
<div style="left:13px;top:373px;width:198px;height:27px;border:1px solid #9ca1a9;background:linear-gradient(#e3e6eb 0,#d3d7de 55%,#dadde3 100%);box-shadow:inset 0 0 0 1px rgba(255,255,255,.55);"></div>
<span class="t" style="left:42px;top:381px;font-weight:bold;color:#262830;letter-spacing:0.343px;">Contactos e industriales</span>
<svg style="left:192px;top:382px;" width="9" height="7" viewBox="0 0 9 7"><path d="M1.2 5.6 L4.5 2.3 L7.8 5.6" fill="none" stroke="#6a6e76" stroke-width="1.8"/></svg>
<div style="left:13px;top:506px;width:198px;height:27px;border:1px solid #9ca1a9;background:linear-gradient(#e3e6eb 0,#d3d7de 55%,#dadde3 100%);box-shadow:inset 0 0 0 1px rgba(255,255,255,.55);"></div>
<span class="t" style="left:42px;top:514px;font-weight:bold;color:#262830;letter-spacing:0.165px;">Adicional</span>
<svg style="left:192px;top:515px;" width="9" height="7" viewBox="0 0 9 7"><path d="M1.2 5.6 L4.5 2.3 L7.8 5.6" fill="none" stroke="#6a6e76" stroke-width="1.8"/></svg>
<svg style="left:22px;top:156px;" width="16" height="16" viewBox="0 0 16 16"><rect x="1.5" y="0.5" width="12" height="13" rx="1" fill="#edf1f6" stroke="#8a9cb8"/><g fill="#a5b5cc"><rect x="3.1" y="2.2" width="1.8" height="1.8"/><rect x="3.1" y="4.4" width="1.8" height="1.8"/><rect x="3.1" y="6.6000000000000005" width="1.8" height="1.8"/><rect x="3.1" y="8.8" width="1.8" height="1.8"/><rect x="5.300000000000001" y="2.2" width="1.8" height="1.8"/><rect x="5.300000000000001" y="4.4" width="1.8" height="1.8"/><rect x="5.300000000000001" y="6.6000000000000005" width="1.8" height="1.8"/><rect x="5.300000000000001" y="8.8" width="1.8" height="1.8"/><rect x="7.5" y="2.2" width="1.8" height="1.8"/><rect x="7.5" y="4.4" width="1.8" height="1.8"/><rect x="7.5" y="6.6000000000000005" width="1.8" height="1.8"/><rect x="7.5" y="8.8" width="1.8" height="1.8"/><rect x="9.700000000000001" y="2.2" width="1.8" height="1.8"/><rect x="9.700000000000001" y="4.4" width="1.8" height="1.8"/><rect x="9.700000000000001" y="6.6000000000000005" width="1.8" height="1.8"/><rect x="9.700000000000001" y="8.8" width="1.8" height="1.8"/></g><rect x="5.2" y="10.3" width="4.6" height="0.9" fill="#6f8fb8"/><rect x="6" y="11.2" width="3" height="3" fill="#e07c12"/><rect x="7.3" y="11.2" width="0.5" height="3" fill="#f7b25a"/><path d="M0 14.6 C0 12.4 1.4 12.2 2.6 12.2 C4 12.2 5.2 12.6 5.2 14.6 Z" fill="#6d9b1d"/><path d="M10 14.6 C10 12.4 11.4 12.2 12.6 12.2 C14 12.2 15.2 12.6 15.2 14.6 Z" fill="#6d9b1d"/><rect x="0" y="14.4" width="15.2" height="0.8" fill="#7a9a4a" opacity=".8"/></svg>
<svg style="left:22px;top:379px;" width="16" height="16" viewBox="0 0 16 16"><path d="M8 15 C8 11.8 9.6 10.4 11.8 10.4 C14 10.4 15.8 11.8 15.8 15 Z" fill="#2a2f6a"/><path d="M11 10.6 H12.4 L12.5 13.4 L11.7 14.2 L10.9 13.4 Z" fill="#d02030"/><ellipse cx="11.8" cy="6.4" rx="2.7" ry="3.1" fill="#e6aa7c"/><path d="M8.9 6.2 C8.6 2.8 10.2 1.8 11.8 1.8 C13.8 1.8 15 3 14.7 6.2 C13.8 4.6 10.2 4.6 8.9 6.2 Z" fill="#9a5526"/><path d="M0.4 15 C0.4 11 2.6 9.8 5.6 9.8 C8.6 9.8 10.6 11.2 10.6 15 Z" fill="#1f8fe2"/><ellipse cx="5" cy="6.2" rx="2.8" ry="3.1" fill="#f0bc98"/><path d="M1.6 5.4 C1.4 2.2 3.2 1.2 5 1.2 C6.8 1.2 8.4 2.2 8.3 4.6 L9 5.4 H1.6 Z" fill="#2b82d4"/><path d="M3 2.6 C3.8 1.9 5.4 1.8 6.4 2.4" fill="none" stroke="#8cc6f4" stroke-width=".7"/></svg>
<svg style="left:24px;top:511px;" width="12" height="17" viewBox="0 0 12 17"><defs><linearGradient id="dbg" x1="0" y1="0" x2="1" y2="0"><stop offset="0" stop-color="#e6aa18"/><stop offset=".3" stop-color="#fff2a8"/><stop offset=".6" stop-color="#f5cf45"/><stop offset="1" stop-color="#dd9c0c"/></linearGradient></defs><path d="M0.6 3.2 V13.8 C0.6 15.2 3 16.2 6 16.2 C9 16.2 11.4 15.2 11.4 13.8 V3.2 Z" fill="url(#dbg)" stroke="#b88a14" stroke-width=".8"/><ellipse cx="6" cy="3.2" rx="5.4" ry="2.2" fill="#fdeb9a" stroke="#c0921a" stroke-width=".8"/></svg>
<span class="t" style="left:38.4px;top:185px;letter-spacing:-0.174px;">Datos generales</span>
<span class="t" style="left:38.4px;top:203px;letter-spacing:-0.128px;">Direcciones y departamentos</span>
<span class="t" style="left:38.4px;top:221px;letter-spacing:-0.139px;">Estructura de liquidación</span>
<span class="t" style="left:38.4px;top:239px;letter-spacing:-0.129px;">Coeficientes</span>
<span class="t" style="left:38.4px;top:257px;letter-spacing:-0.212px;">Planes de gastos</span>
<span class="t" style="left:38.4px;top:275px;color:#3c3c3c;letter-spacing:-0.189px;">Presupuestos</span>
<span class="t" style="left:38.4px;top:293px;letter-spacing:-0.159px;">Datos de recibos</span>
<span class="t" style="left:38.4px;top:311px;letter-spacing:-0.044px;">Contratos de propiedad</span>
<span class="t" style="left:38.4px;top:329px;color:#3c3c3c;letter-spacing:-0.161px;">Cuentas bancarias</span>
<span class="t" style="left:38.4px;top:347px;color:#3c3c3c;letter-spacing:-0.287px;">Derramas</span>
<span class="t" style="left:38.4px;top:408px;color:#3c3c3c;letter-spacing:-0.073px;">Cargos junta</span>
<span class="t" style="left:38.4px;top:426px;color:#3c3c3c;letter-spacing:-0.450px;">Empleados</span>
<span class="t" style="left:38.4px;top:444px;color:#3c3c3c;">Otros contactos</span>
<span class="t" style="left:38.4px;top:462px;color:#3c3c3c;letter-spacing:-0.197px;">Seguros y mantenimientos</span>
<span class="t" style="left:38.4px;top:480px;color:#3c3c3c;letter-spacing:-0.064px;">Industriales</span>
<span class="t" style="left:38.4px;top:541px;color:#3c3c3c;letter-spacing:-0.277px;">Documentos</span>
<span class="t" style="left:38.4px;top:559px;color:#3c3c3c;letter-spacing:-0.144px;">Configuración</span>
<span class="t" style="left:38.4px;top:577px;color:#3c3c3c;letter-spacing:-0.072px;">Certificado digital</span>
<span class="t" style="left:38.4px;top:595px;color:#3c3c3c;letter-spacing:-0.083px;">Impuestos</span>
<span class="t" style="left:38.4px;top:613px;color:#3c3c3c;letter-spacing:-0.295px;">Usuarios con acceso</span>
</div>
<div class="g" id="main-panel">
<span class="t" style="left:219px;top:152px;font-weight:bold;color:#262830;letter-spacing:0.475px;">Seguros y mantenimientos</span>
<div style="left:1078px;top:173px;width:2px;height:561px;background:#dcdfe3;"></div>
<div style="left:217px;top:732px;width:863px;height:1px;background:#dfe2e6;"></div>
<div style="left:9px;top:733px;width:1072px;height:1px;background:#c6c9ce;"></div>
<div style="left:1080px;top:145px;width:1px;height:589px;background:#a3a7ae;"></div>
<div style="left:217px;top:173px;width:861px;height:559px;background:#fff;border:1px solid #a5a9b0;"></div>
<div style="left:988px;top:189px;width:13px;height:13px;border:1px solid #a3a8b0;background:linear-gradient(#f6f6f7,#e6e7e9);box-shadow:inset 0 0 0 1px rgba(255,255,255,.7);"></div>
<svg style="left:989px;top:190px;" width="11" height="11" viewBox="0 0 11 11"><path d="M1.8 4.6 L3.2 4.2 L4.6 6.6 L8.2 1.6 L9.6 1.8 L5 9.4 L4 9.4 Z" fill="#3a3d42"/></svg>
<span class="t" style="left:1004.6px;top:190px;letter-spacing:-0.193px;">Sólo activos</span>
</div>
<div class="g" id="grid-polizas">
<div style="left:229px;top:209px;width:837px;height:150px;border:1px solid #a0a5ad;background:#fff;"></div>
<div style="left:230px;top:210px;width:835px;height:21px;background:linear-gradient(#f7f8fa 0,#f1f3f6 55%,#ebeef2 100%);"></div>
<div style="left:230px;top:231px;width:835px;height:1px;background:#a0a5ad;"></div>
<div style="left:230px;top:232px;width:16px;height:63px;background:#f3f4f7;"></div>
<div style="left:245px;top:210px;width:1px;height:21px;background:#a0a5ad;"></div>
<div style="left:245px;top:232px;width:1px;height:63px;background:#d6d8dc;"></div>
<div style="left:297px;top:210px;width:1px;height:21px;background:#a0a5ad;"></div>
<div style="left:297px;top:232px;width:1px;height:63px;background:#d6d8dc;"></div>
<div style="left:413px;top:210px;width:1px;height:21px;background:#a0a5ad;"></div>
<div style="left:413px;top:232px;width:1px;height:63px;background:#d6d8dc;"></div>
<div style="left:543px;top:210px;width:1px;height:21px;background:#a0a5ad;"></div>
<div style="left:543px;top:232px;width:1px;height:63px;background:#d6d8dc;"></div>
<div style="left:781px;top:210px;width:1px;height:21px;background:#a0a5ad;"></div>
<div style="left:781px;top:232px;width:1px;height:63px;background:#d6d8dc;"></div>
<div style="left:884px;top:210px;width:1px;height:21px;background:#a0a5ad;"></div>
<div style="left:884px;top:232px;width:1px;height:63px;background:#d6d8dc;"></div>
<div style="left:992px;top:210px;width:1px;height:21px;background:#a0a5ad;"></div>
<div style="left:992px;top:232px;width:1px;height:63px;background:#d6d8dc;"></div>
<div style="left:245px;top:232px;width:1px;height:63px;background:#a0a5ad;"></div>
<div style="left:230px;top:252px;width:835px;height:1px;background:#d6d8dc;"></div>
<div style="left:230px;top:273px;width:835px;height:1px;background:#d6d8dc;"></div>
<div style="left:230px;top:294px;width:835px;height:1px;background:#d6d8dc;"></div>
<svg style="left:268px;top:213px;" width="8" height="15" viewBox="0 0 8 15"><path d="M0.5 3.5 V11.2 Q0.5 13.5 3.2 13.5 Q6.5 13.5 6.5 11 V2.4 Q6.5 0.6 4.5 0.6 Q2.5 0.6 2.5 2.6 V10 Q2.5 11.3 3.5 11.3 Q4.5 11.3 4.5 10 V3.5" fill="none" stroke="#4a5874" stroke-width=".9"/></svg>
<span class="t" style="left:301.5px;top:214px;color:#33384a;letter-spacing:-0.495px;width:200px;overflow:hidden;">Póliza</span>
<svg style="left:401px;top:218px;" width="7" height="4" viewBox="0 0 7 4"><path d="M0 4 L3.5 0 L7 4 Z" fill="#222"/></svg>
<span class="t" style="left:417.5px;top:214px;color:#33384a;letter-spacing:-0.361px;width:200px;overflow:hidden;">Descripción</span>
<span class="t" style="left:547.5px;top:214px;color:#33384a;letter-spacing:0.036px;width:200px;overflow:hidden;">Industrial</span>
<span class="t" style="left:785.5px;top:214px;color:#33384a;letter-spacing:-0.312px;width:200px;overflow:hidden;">Vencimiento</span>
<span class="t" style="left:888.5px;top:214px;color:#33384a;letter-spacing:-0.069px;width:176.5px;overflow:hidden;">Fecha de contrato</span>
<span class="t" style="left:996.5px;top:214px;color:#33384a;letter-spacing:-0.318px;width:68.5px;overflow:hidden;">Dirección</span>
<svg style="left:268px;top:235px;" width="8" height="15" viewBox="0 0 8 15"><path d="M0.5 3.5 V11.2 Q0.5 13.5 3.2 13.5 Q6.5 13.5 6.5 11 V2.4 Q6.5 0.6 4.5 0.6 Q2.5 0.6 2.5 2.6 V10 Q2.5 11.3 3.5 11.3 Q4.5 11.3 4.5 10 V3.5" fill="none" stroke="#4a5874" stroke-width=".9"/></svg>
<span class="t" style="left:301.5px;top:236px;letter-spacing:-0.193px;width:763.5px;overflow:hidden;">658432AJ</span>
<span class="t" style="left:417.5px;top:236px;letter-spacing:-0.207px;width:647.5px;overflow:hidden;">Seguro Multiriesgo</span>
<span class="t" style="left:547.5px;top:236px;letter-spacing:-0.163px;width:517.5px;overflow:hidden;">Fiatc Mutua de Seguros y Reaseguros</span>
<span class="t" style="left:785.5px;top:236px;letter-spacing:0.094px;width:279.5px;overflow:hidden;">15/01/2022</span>
<span class="t" style="left:996.5px;top:236px;letter-spacing:-0.363px;width:68.5px;overflow:hidden;">Comunidad</span>
<span class="t" style="left:301.5px;top:257px;letter-spacing:-0.270px;width:763.5px;overflow:hidden;">658867HJ</span>
<span class="t" style="left:417.5px;top:257px;letter-spacing:-0.184px;width:647.5px;overflow:hidden;">Defensa Juridica</span>
<span class="t" style="left:547.5px;top:257px;letter-spacing:-0.163px;width:517.5px;overflow:hidden;">Fiatc Mutua de Seguros y Reaseguros</span>
<span class="t" style="left:996.5px;top:257px;letter-spacing:-0.363px;width:68.5px;overflow:hidden;">Comunidad</span>
<svg style="left:236px;top:281px;" width="4" height="7" viewBox="0 0 4 7"><path d="M0 0 L4 3.5 L0 7 Z" fill="#7a7d82"/></svg>
<svg style="left:268px;top:277px;" width="8" height="15" viewBox="0 0 8 15"><path d="M0.5 3.5 V11.2 Q0.5 13.5 3.2 13.5 Q6.5 13.5 6.5 11 V2.4 Q6.5 0.6 4.5 0.6 Q2.5 0.6 2.5 2.6 V10 Q2.5 11.3 3.5 11.3 Q4.5 11.3 4.5 10 V3.5" fill="none" stroke="#4a5874" stroke-width=".9"/></svg>
<span class="t" style="left:301.5px;top:278px;letter-spacing:-0.424px;width:763.5px;overflow:hidden;">EX000012</span>
<span class="t" style="left:417.5px;top:278px;letter-spacing:-0.017px;width:647.5px;overflow:hidden;">Mantenimiento extintores</span>
<span class="t" style="left:547.5px;top:278px;letter-spacing:-0.065px;width:517.5px;overflow:hidden;">Extintores Pinto</span>
<span class="t" style="left:996.5px;top:278px;letter-spacing:-0.363px;width:68.5px;overflow:hidden;">Comunidad</span>
<div style="left:230px;top:341px;width:835px;height:17px;background:linear-gradient(#f1f1f1 0,#fafafa 60%,#ffffff 100%);"></div>
<div style="left:230px;top:341px;width:835px;height:1px;background:#f1f1f1;"></div>
<div style="left:230px;top:341px;width:32px;height:17px;background:#f0f0f0;"></div>
<div style="left:345px;top:341px;width:30px;height:17px;background:#f0f0f0;"></div>
<div style="left:262px;top:341px;width:83px;height:17px;background:#fff;"></div>
<span class="t" style="left:266px;top:344px;letter-spacing:-0.107px;">Registro 3 de 3</span>
<svg style="left:233px;top:346px;" width="10" height="8" viewBox="0 0 10 8"><path d="M0 0 H1.5 V8 H0 Z M5.5 0 V8 L1.5 4 Z M9.5 0 V8 L5.5 4 Z" fill="#555"/></svg>
<svg style="left:251px;top:346px;" width="5" height="8" viewBox="0 0 5 8"><path d="M5 0 V8 L0 4 Z" fill="#555"/></svg>
<svg style="left:351px;top:346px;" width="5" height="8" viewBox="0 0 5 8"><path d="M0 0 V8 L5 4 Z" fill="#9a9a9a"/></svg>
<svg style="left:363px;top:346px;" width="10" height="8" viewBox="0 0 10 8"><path d="M0 0 V8 L4 4 Z M4 0 V8 L8 4 Z M8.5 0 H10 V8 H8.5 Z" fill="#9a9a9a"/></svg>
<svg style="left:381px;top:345px;" width="6" height="10" viewBox="0 0 6 10"><path d="M5.5 0 V10 L0 5 Z" fill="#505256"/></svg>
<svg style="left:1054px;top:345px;" width="6" height="10" viewBox="0 0 6 10"><path d="M0 0 V10 L5.5 5 Z" fill="#505256"/></svg>
<div style="left:392px;top:342px;width:308px;height:15px;border:1px solid #a3a7ad;border-radius:2px;background:linear-gradient(#f8f8f8,#ebebeb);"></div>
<div style="left:626px;top:346px;width:1px;height:7px;background:#666;"></div>
<div style="left:628px;top:346px;width:1px;height:7px;background:#666;"></div>
<div style="left:630px;top:346px;width:1px;height:7px;background:#666;"></div>
<div style="left:632px;top:346px;width:1px;height:7px;background:#666;"></div>
<div style="left:246px;top:274px;width:818px;height:20px;border:1px dotted #222;"></div>
<div style="left:244px;top:274px;width:396px;height:20px;border:2px solid #f20d0d;"></div>
</div>
<div class="g" id="grid-mantenimientos">
<div style="left:229px;top:385px;width:837px;height:335px;border:1px solid #a0a5ad;background:#fff;"></div>
<div style="left:230px;top:386px;width:835px;height:21px;background:linear-gradient(#f7f8fa 0,#f1f3f6 55%,#ebeef2 100%);"></div>
<div style="left:230px;top:407px;width:835px;height:1px;background:#a0a5ad;"></div>
<div style="left:230px;top:408px;width:16px;height:105px;background:#f3f4f7;"></div>
<div style="left:245px;top:386px;width:1px;height:21px;background:#a0a5ad;"></div>
<div style="left:245px;top:408px;width:1px;height:105px;background:#d6d8dc;"></div>
<div style="left:297px;top:386px;width:1px;height:21px;background:#a0a5ad;"></div>
<div style="left:297px;top:408px;width:1px;height:105px;background:#d6d8dc;"></div>
<div style="left:397px;top:386px;width:1px;height:21px;background:#a0a5ad;"></div>
<div style="left:397px;top:408px;width:1px;height:105px;background:#d6d8dc;"></div>
<div style="left:572px;top:386px;width:1px;height:21px;background:#a0a5ad;"></div>
<div style="left:572px;top:408px;width:1px;height:105px;background:#d6d8dc;"></div>
<div style="left:737px;top:386px;width:1px;height:21px;background:#a0a5ad;"></div>
<div style="left:737px;top:408px;width:1px;height:105px;background:#d6d8dc;"></div>
<div style="left:837px;top:386px;width:1px;height:21px;background:#a0a5ad;"></div>
<div style="left:837px;top:408px;width:1px;height:105px;background:#d6d8dc;"></div>
<div style="left:945px;top:386px;width:1px;height:21px;background:#a0a5ad;"></div>
<div style="left:945px;top:408px;width:1px;height:105px;background:#d6d8dc;"></div>
<div style="left:1045px;top:386px;width:1px;height:21px;background:#a0a5ad;"></div>
<div style="left:1045px;top:408px;width:1px;height:105px;background:#d6d8dc;"></div>
<div style="left:245px;top:408px;width:1px;height:105px;background:#a0a5ad;"></div>
<div style="left:230px;top:428px;width:835px;height:1px;background:#d6d8dc;"></div>
<div style="left:230px;top:449px;width:835px;height:1px;background:#d6d8dc;"></div>
<div style="left:230px;top:470px;width:835px;height:1px;background:#d6d8dc;"></div>
<div style="left:230px;top:491px;width:835px;height:1px;background:#d6d8dc;"></div>
<div style="left:230px;top:512px;width:835px;height:1px;background:#d6d8dc;"></div>
<svg style="left:268px;top:389px;" width="8" height="15" viewBox="0 0 8 15"><path d="M0.5 3.5 V11.2 Q0.5 13.5 3.2 13.5 Q6.5 13.5 6.5 11 V2.4 Q6.5 0.6 4.5 0.6 Q2.5 0.6 2.5 2.6 V10 Q2.5 11.3 3.5 11.3 Q4.5 11.3 4.5 10 V3.5" fill="none" stroke="#4a5874" stroke-width=".9"/></svg>
<span class="t" style="left:301.5px;top:390px;color:#33384a;letter-spacing:0.100px;width:200px;overflow:hidden;">Contrato</span>
<svg style="left:385px;top:394px;" width="7" height="4" viewBox="0 0 7 4"><path d="M0 4 L3.5 0 L7 4 Z" fill="#222"/></svg>
<span class="t" style="left:401.5px;top:390px;color:#33384a;letter-spacing:-0.361px;width:200px;overflow:hidden;">Descripción</span>
<span class="t" style="left:576.5px;top:390px;color:#33384a;letter-spacing:0.036px;width:200px;overflow:hidden;">Industrial</span>
<span class="t" style="left:741.5px;top:390px;color:#33384a;letter-spacing:-0.312px;width:200px;overflow:hidden;">Vencimiento</span>
<span class="t" style="left:833.6px;top:390px;color:#33384a;letter-spacing:0.384px;">Fecha de contrato</span>
<span class="t" style="left:949.5px;top:390px;color:#33384a;letter-spacing:-0.311px;width:115.5px;overflow:hidden;">Elemento</span>
<span class="t" style="left:1049.5px;top:390px;color:#33384a;letter-spacing:-0.318px;width:15.5px;overflow:hidden;">Dirección</span>
<svg style="left:236px;top:415px;" width="4" height="7" viewBox="0 0 4 7"><path d="M0 0 L4 3.5 L0 7 Z" fill="#7a7d82"/></svg>
<span class="t" style="left:301.5px;top:412px;letter-spacing:-0.326px;width:763.5px;overflow:hidden;">AG012358</span>
<span class="t" style="left:401.5px;top:412px;letter-spacing:-0.176px;width:663.5px;overflow:hidden;">Agua</span>
<span class="t" style="left:576.5px;top:412px;letter-spacing:-0.180px;width:488.5px;overflow:hidden;">Sociedad General de Aguas</span>
<span class="t" style="left:1049.5px;top:412px;letter-spacing:-0.363px;width:15.5px;overflow:hidden;">Comunidad</span>
<span class="t" style="left:301.5px;top:433px;letter-spacing:-0.312px;width:763.5px;overflow:hidden;">EN978563</span>
<span class="t" style="left:401.5px;top:433px;letter-spacing:-0.272px;width:663.5px;overflow:hidden;">Electricidad Escalera</span>
<span class="t" style="left:576.5px;top:433px;letter-spacing:-0.190px;width:488.5px;overflow:hidden;">Endesa Energia, S.A.U.</span>
<span class="t" style="left:1049.5px;top:433px;letter-spacing:-0.363px;width:15.5px;overflow:hidden;">Comunidad</span>
<span class="t" style="left:301.5px;top:454px;letter-spacing:-0.312px;width:763.5px;overflow:hidden;">EN978564</span>
<span class="t" style="left:401.5px;top:454px;letter-spacing:-0.265px;width:663.5px;overflow:hidden;">Electricidad ascensor</span>
<span class="t" style="left:576.5px;top:454px;letter-spacing:-0.190px;width:488.5px;overflow:hidden;">Endesa Energia, S.A.U.</span>
<span class="t" style="left:1049.5px;top:454px;letter-spacing:-0.363px;width:15.5px;overflow:hidden;">Comunidad</span>
<svg style="left:268px;top:474px;" width="8" height="15" viewBox="0 0 8 15"><path d="M0.5 3.5 V11.2 Q0.5 13.5 3.2 13.5 Q6.5 13.5 6.5 11 V2.4 Q6.5 0.6 4.5 0.6 Q2.5 0.6 2.5 2.6 V10 Q2.5 11.3 3.5 11.3 Q4.5 11.3 4.5 10 V3.5" fill="none" stroke="#4a5874" stroke-width=".9"/></svg>
<span class="t" style="left:301.5px;top:475px;letter-spacing:-0.361px;width:763.5px;overflow:hidden;">SA234560</span>
<span class="t" style="left:401.5px;top:475px;letter-spacing:-0.392px;width:663.5px;overflow:hidden;">Limpieza escalera</span>
<span class="t" style="left:576.5px;top:475px;letter-spacing:-0.334px;width:488.5px;overflow:hidden;">Limpiezas Sampedro, S.L.</span>
<span class="t" style="left:1049.5px;top:475px;letter-spacing:-0.363px;width:15.5px;overflow:hidden;">Comunidad</span>
<svg style="left:268px;top:495px;" width="8" height="15" viewBox="0 0 8 15"><path d="M0.5 3.5 V11.2 Q0.5 13.5 3.2 13.5 Q6.5 13.5 6.5 11 V2.4 Q6.5 0.6 4.5 0.6 Q2.5 0.6 2.5 2.6 V10 Q2.5 11.3 3.5 11.3 Q4.5 11.3 4.5 10 V3.5" fill="none" stroke="#4a5874" stroke-width=".9"/></svg>
<span class="t" style="left:301.5px;top:496px;letter-spacing:-0.377px;width:763.5px;overflow:hidden;">TY0098760</span>
<span class="t" style="left:401.5px;top:496px;letter-spacing:-0.220px;width:663.5px;overflow:hidden;">Mantenimiento ascensor</span>
<span class="t" style="left:576.5px;top:496px;letter-spacing:-0.199px;width:488.5px;overflow:hidden;">ThyssnKrupp Elevadores, S.L.</span>
<span class="t" style="left:1049.5px;top:496px;letter-spacing:-0.363px;width:15.5px;overflow:hidden;">Comunidad</span>
<div style="left:230px;top:702px;width:835px;height:17px;background:linear-gradient(#f1f1f1 0,#fafafa 60%,#ffffff 100%);"></div>
<div style="left:230px;top:702px;width:835px;height:1px;background:#f1f1f1;"></div>
<div style="left:230px;top:702px;width:32px;height:17px;background:#f0f0f0;"></div>
<div style="left:345px;top:702px;width:30px;height:17px;background:#f0f0f0;"></div>
<div style="left:262px;top:702px;width:83px;height:17px;background:#fff;"></div>
<span class="t" style="left:266px;top:705px;letter-spacing:-0.107px;">Registro 1 de 5</span>
<svg style="left:233px;top:707px;" width="10" height="8" viewBox="0 0 10 8"><path d="M0 0 H1.5 V8 H0 Z M5.5 0 V8 L1.5 4 Z M9.5 0 V8 L5.5 4 Z" fill="#9a9a9a"/></svg>
<svg style="left:251px;top:707px;" width="5" height="8" viewBox="0 0 5 8"><path d="M5 0 V8 L0 4 Z" fill="#9a9a9a"/></svg>
<svg style="left:351px;top:707px;" width="5" height="8" viewBox="0 0 5 8"><path d="M0 0 V8 L5 4 Z" fill="#555"/></svg>
<svg style="left:363px;top:707px;" width="10" height="8" viewBox="0 0 10 8"><path d="M0 0 V8 L4 4 Z M4 0 V8 L8 4 Z M8.5 0 H10 V8 H8.5 Z" fill="#555"/></svg>
<svg style="left:381px;top:706px;" width="6" height="10" viewBox="0 0 6 10"><path d="M5.5 0 V10 L0 5 Z" fill="#505256"/></svg>
<svg style="left:1054px;top:706px;" width="6" height="10" viewBox="0 0 6 10"><path d="M0 0 V10 L5.5 5 Z" fill="#505256"/></svg>
<div style="left:392px;top:703px;width:465px;height:15px;border:1px solid #a3a7ad;border-radius:2px;background:linear-gradient(#f8f8f8,#ebebeb);"></div>
<div style="left:621px;top:707px;width:1px;height:7px;background:#666;"></div>
<div style="left:623px;top:707px;width:1px;height:7px;background:#666;"></div>
<div style="left:625px;top:707px;width:1px;height:7px;background:#666;"></div>
<div style="left:627px;top:707px;width:1px;height:7px;background:#666;"></div>
</div>
<div class="g" id="section-labels">
<div style="left:225px;top:191px;width:90px;height:17px;background:#ffff35;"></div>
<span class="t" style="left:228px;top:193px;letter-spacing:-0.262px;">Pólizas de seguro</span>
<div style="left:224px;top:366px;width:144px;height:20px;background:#ffff35;"></div>
<span class="t" style="left:228px;top:370px;letter-spacing:-0.140px;">Mantenimientos y garantías</span>
</div>
<div class="g" id="statusbar">
<div style="left:8px;top:735px;width:1073px;height:26px;background:linear-gradient(#9da1a8 0,#9da1a8 1px,#fbfbfc 1px,#fbfbfc 2px,#e7e9ec 2px,#d9dce0 45%,#c6c9ce 80%,#c2c5ca 100%);border-bottom:1px solid #8d9299;"></div>
<div style="left:1076px;top:746px;width:2px;height:2px;background:#9a9ea5;box-shadow:1px 1px 0 rgba(255,255,255,.55);"></div>
<div style="left:1072px;top:750px;width:2px;height:2px;background:#9a9ea5;box-shadow:1px 1px 0 rgba(255,255,255,.55);"></div>
<div style="left:1076px;top:750px;width:2px;height:2px;background:#9a9ea5;box-shadow:1px 1px 0 rgba(255,255,255,.55);"></div>
<div style="left:1068px;top:754px;width:2px;height:2px;background:#9a9ea5;box-shadow:1px 1px 0 rgba(255,255,255,.55);"></div>
<div style="left:1072px;top:754px;width:2px;height:2px;background:#9a9ea5;box-shadow:1px 1px 0 rgba(255,255,255,.55);"></div>
<div style="left:1076px;top:754px;width:2px;height:2px;background:#9a9ea5;box-shadow:1px 1px 0 rgba(255,255,255,.55);"></div>
</div>
<div class="g" id="context-menu">
<div style="left:640px;top:277px;width:253px;height:151px;background:#fff;border:1px solid #a7abb0;box-shadow:1px 1px 3px rgba(0,0,0,.25);"></div>
<div style="left:665px;top:279px;width:1px;height:147px;background:#e2e3e5;"></div>
<div style="left:643px;top:326px;width:250px;height:25px;background:linear-gradient(#fdf4d3 0,#fae8a6 40%,#f8dc82 58%,#fbeab0 100%);border:2px solid #f20d0d;"></div>
<span class="t" style="left:671px;top:284px;font-size:12px;line-height:14px;letter-spacing:0.062px;">Nuevo</span>
<span class="t" style="left:671px;top:308px;font-size:12px;line-height:14px;letter-spacing:-0.070px;">Duplicar seguro</span>
<span class="t" style="left:671px;top:332px;font-size:12px;line-height:14px;letter-spacing:-0.032px;">Mover a Mantenimientos y garantías</span>
<span class="t" style="left:671px;top:356px;font-size:12px;line-height:14px;letter-spacing:0.131px;">Abrir</span>
<span class="t" style="left:671px;top:380px;font-size:12px;line-height:14px;letter-spacing:-0.043px;">Eliminar</span>
<span class="t" style="left:671px;top:407px;font-size:12px;line-height:14px;letter-spacing:0.030px;">Industrial</span>
<div style="left:671px;top:400px;width:220px;height:1px;border-top:1px dashed #c8c8c8;"></div>
<svg style="left:876px;top:410px;" width="4" height="8" viewBox="0 0 4 8"><path d="M0 0 L4 4 L0 8 Z" fill="#111"/></svg>
<svg style="left:647px;top:283px;" width="12" height="15" viewBox="0 0 12 15"><path d="M1.5 1.5 H7.5 L10.5 4.5 V13.5 H1.5 Z" fill="#fff"/><path d="M1.5 13.5 V1.5 H7.5" fill="none" stroke="#8a8a8a" stroke-width="1"/><path d="M7.2 1.6 L10.4 4.8" fill="none" stroke="#6a6a6a" stroke-width="1"/><path d="M7 4.6 H10.3 V13.3 H1.2" fill="none" stroke="#000" stroke-width="1.4"/></svg>
<svg style="left:645px;top:307px;" width="16" height="16" viewBox="0 0 16 16"><path d="M1.5 1.8 H6 V13.6 H1.5 Z" fill="#fff"/><path d="M1.5 13.6 V1.8 H6.4" fill="none" stroke="#8a8a8a" stroke-width="1"/><path d="M1 13.7 H5" fill="none" stroke="#000" stroke-width="1.3"/><path d="M5.5 2.6 H11.5 L14.5 5.6 V14.6 H5.5 Z" fill="#fff"/><path d="M5.5 14.6 V2.6 H11.5" fill="none" stroke="#8a8a8a" stroke-width="1"/><path d="M11.2 2.7 L14.4 5.9" fill="none" stroke="#6a6a6a" stroke-width="1"/><path d="M11 5.7 H14.3 V14.4 H5.2" fill="none" stroke="#000" stroke-width="1.4"/></svg>
<svg style="left:644px;top:355px;" width="18" height="15" viewBox="0 0 18 15"><defs><linearGradient id="fo1" x1="0" y1="0" x2="0" y2="1"><stop offset="0" stop-color="#fff4b8"/><stop offset="1" stop-color="#f0c020"/></linearGradient></defs><path d="M1.5 12.8 V2.6 Q1.5 1.4 2.8 1.4 H5.6 L7.2 3.2 H13.6 Q14.6 3.2 14.6 4.2 V6.2" fill="#f7d860" stroke="#a87a10" stroke-width="1"/><path d="M1.6 13.4 L4.4 6.4 H17 L14 13.4 Z" fill="url(#fo1)" stroke="#a87a10" stroke-width="1" stroke-linejoin="round"/></svg>
<svg style="left:646px;top:380px;" width="14" height="14" viewBox="0 0 14 14"><defs><linearGradient id="mx1" x1="0" y1="0" x2="0" y2="1"><stop offset="0" stop-color="#e0555a"/><stop offset=".5" stop-color="#c4181d"/><stop offset="1" stop-color="#b51015"/></linearGradient></defs><ellipse cx="7" cy="13" rx="5.6" ry=".8" fill="#000" opacity=".12"/><path d="M3 1 L7 5 L11 1 L13.2 3.2 L9.2 7.2 L13.2 11.2 L11 13.2 L7 9.4 L3 13.2 L0.8 11.2 L4.8 7.2 L0.8 3.2 Z" fill="url(#mx1)" stroke="#a81216" stroke-width=".5"/></svg>
<svg style="left:645px;top:405px;" width="16" height="17" viewBox="0 0 16 17"><defs><linearGradient id="wk1" x1="0" y1="0" x2="0" y2="1"><stop offset="0" stop-color="#3aa6ee"/><stop offset="1" stop-color="#0f72c8"/></linearGradient></defs><path d="M0.6 16.4 C0.6 12.4 3 10.6 8 10.6 C13 10.6 15.4 12.4 15.4 16.4 Z" fill="url(#wk1)"/><path d="M5.8 9 H10.2 V11 C9.6 12.2 6.4 12.2 5.8 11 Z" fill="#e3a585"/><ellipse cx="8" cy="6.6" rx="3.3" ry="3.8" fill="#edb898"/><path d="M4.4 5.6 C4.2 2 6 0.8 8 0.8 C10 0.8 11.8 2 11.6 5.6 C10 4.6 6 4.6 4.4 5.6 Z" fill="#2b7fc8"/><path d="M6.4 2.2 C7.2 1.6 8.8 1.6 9.6 2.2" fill="none" stroke="#7fc0f0" stroke-width=".8"/></svg>
</div>
</div>
</body>
</html>
